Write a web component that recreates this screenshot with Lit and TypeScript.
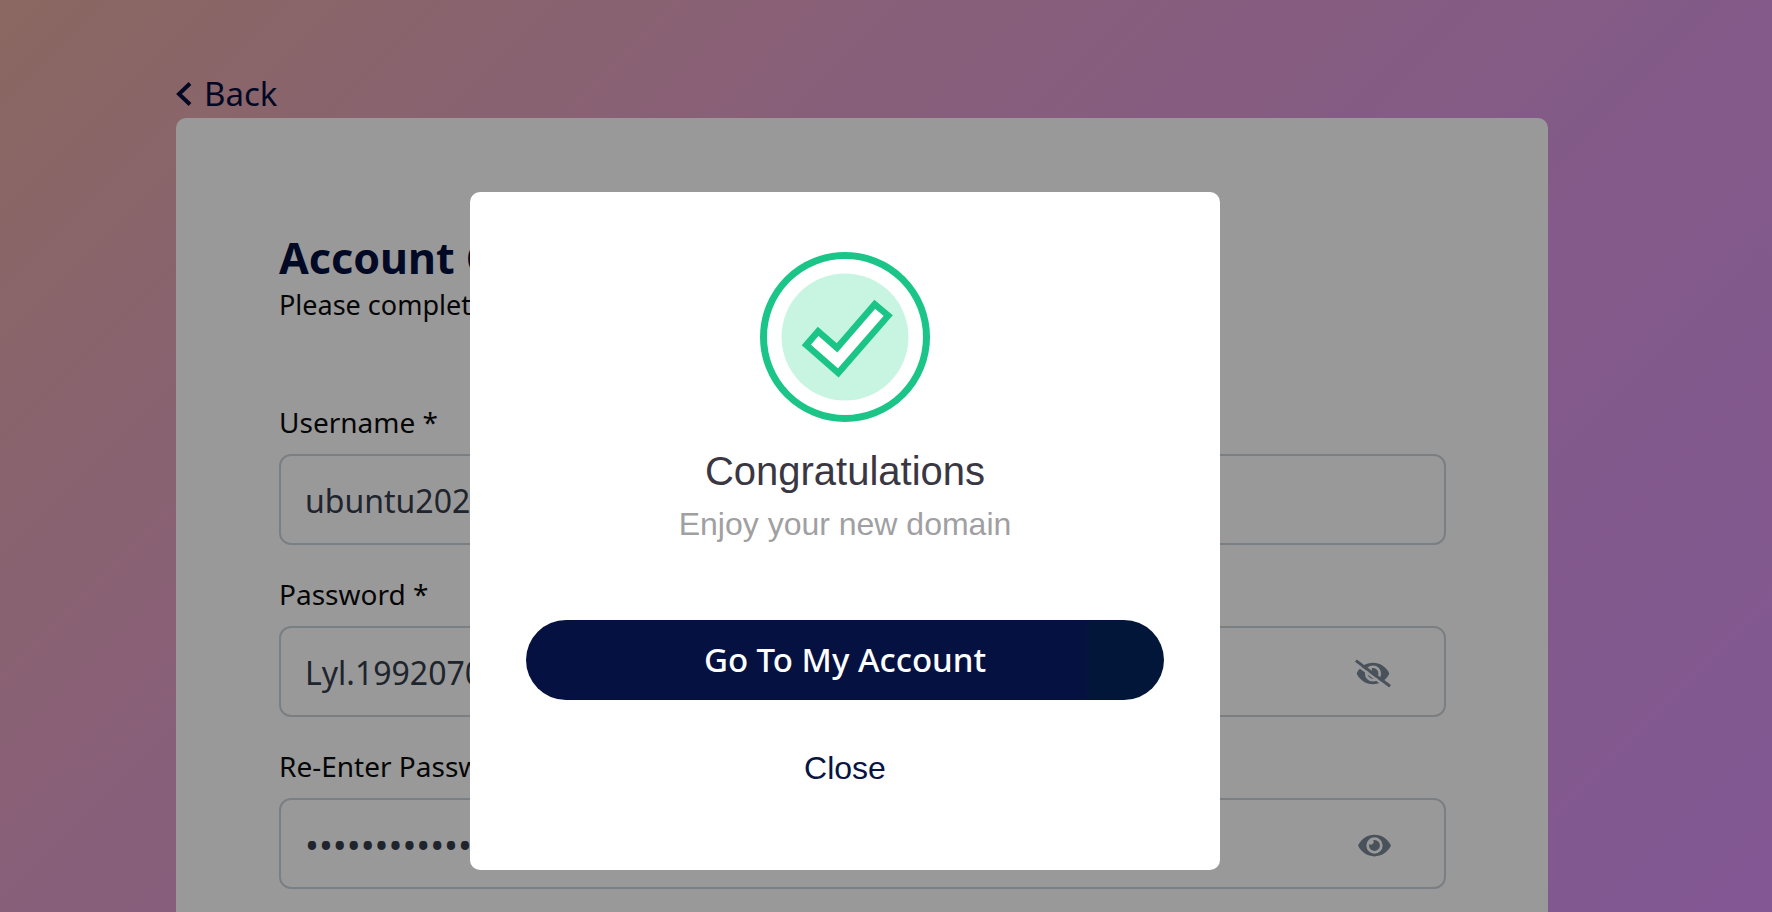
import { LitElement, html, css, svg } from "lit";
import { customElement, property, state } from "lit/decorators.js";

const EYE_SHAPE = "M572.52 241.4C518.29 135.59 410.93 64 288 64S57.68 135.64 3.48 241.41a32.35 32.35 0 0 0 0 29.19C57.71 376.41 165.07 448 288 448s230.32-71.64 284.52-177.41a32.35 32.35 0 0 0 0-29.19zM288 400a144 144 0 1 1 144-144 143.93 143.93 0 0 1-144 144zm0-240a95.31 95.31 0 0 0-25.31 3.79 47.85 47.85 0 0 1-66.9 66.9A95.78 95.78 0 1 0 288 160z";

const EYE = html`<svg viewBox="0 0 576 512" width="33" height="29" aria-hidden="true"><path fill="currentColor" d=${EYE_SHAPE} /></svg>`;

const EYE_OFF = html`<svg viewBox="0 0 640 512" width="36" height="29" aria-hidden="true">
  ${svg`<mask id="gap">
    <rect width="640" height="512" fill="#fff" />
    <path d="M-20 62 592 521" stroke="#000" stroke-width="44" />
  </mask>
  <g mask="url(#gap)"><path transform="translate(32 0)" fill="currentColor" d=${EYE_SHAPE} /></g>
  <path d="M16 26 624 482" stroke="currentColor" stroke-width="52" />`}
</svg>`;

@customElement("form-field")
class FormField extends LitElement {
  @property() label = "";
  @property() value = "";
  @property({ type: Boolean }) secret = false;
  @property({ type: Boolean }) revealed = false;

  static styles = css`
    :host { display: block; }
    .label {
      display: block;
      margin-bottom: 12px;
      font-size: 28px;
      line-height: 40px;
      color: #0a0a0c;
    }
    .box {
      display: flex;
      align-items: center;
      box-sizing: border-box;
      height: 91px;
      padding: 3px 53px 0 24px;
      border: 2px solid #cbd4dc;
      border-radius: 12px;
    }
    .input {
      flex: 1;
      min-width: 0;
      height: 44px;
      padding: 0;
      border: 0;
      outline: 0;
      background: none;
      font: inherit;
      font-size: 32px;
      line-height: 44px;
      color: #343c4c;
    }
    .input.masked { font-size: 37px; }
    .toggle {
      display: flex;
      padding: 0;
      border: 0;
      background: none;
      color: #7b8798;
    }
  `;

  render() {
    const hidden = this.secret && !this.revealed;
    return html`
      <label class="label" for="field">${this.label}</label>
      <div class="box">
        <input
          class=${hidden ? "input masked" : "input"}
          id="field"
          type=${hidden ? "password" : "text"}
          .value=${this.value}
          spellcheck="false"
        />
        ${this.secret
          ? html`<button
              class="toggle"
              type="button"
              aria-label=${hidden ? "Show password" : "Hide password"}
              @click=${() => (this.revealed = !this.revealed)}
            >${hidden ? EYE : EYE_OFF}</button>`
          : null}
      </div>
    `;
  }
}

@customElement("success-dialog")
class SuccessDialog extends LitElement {
  static styles = css`
    :host {
      position: fixed;
      inset: 0;
      display: flex;
      justify-content: center;
      align-items: flex-start;
      padding: 192px 82px 0 0;
      background: rgba(0, 0, 0, 0.4);
      font-family: "Liberation Sans", Arial, sans-serif;
    }
    .dialog {
      display: flex;
      flex-direction: column;
      align-items: center;
      box-sizing: border-box;
      width: 100%;
      max-width: 750px;
      padding: 60px 56px 82px;
      border-radius: 10px;
      background: #fff;
      text-align: center;
    }
    .badge { display: block; }
    .title {
      margin: 25px 0 9px;
      font-size: 40px;
      line-height: 48px;
      font-weight: 400;
      color: #3a3743;
    }
    .text {
      margin: 0 0 76px;
      font-size: 32px;
      line-height: 40px;
      color: #a0a0a2;
    }
    .primary {
      width: 100%;
      height: 80px;
      padding: 0;
      border: 0;
      border-radius: 40px;
      background: linear-gradient(90deg, #041141 88%, #02163a 88%);
      color: #fff;
      font: 500 33px/44px "Noto Sans", sans-serif;
    }
    .close {
      margin-top: 48px;
      padding: 0;
      border: 0;
      background: none;
      font: inherit;
      font-size: 32px;
      line-height: 40px;
      color: #0a1440;
    }
  `;

  private dismiss() {
    this.dispatchEvent(new CustomEvent("dismiss"));
  }

  render() {
    return html`
      <div class="dialog" role="dialog" aria-modal="true" aria-labelledby="title">
        <svg class="badge" width="170" height="170" viewBox="0 0 170 170" aria-hidden="true">
          <circle cx="85" cy="85" r="81.5" fill="none" stroke="#1bc588" stroke-width="7" />
          <circle cx="85" cy="85" r="63.5" fill="#c8f5e1" />
          <path d="M46.3 93 58.1 79.4 77 95.8 114.7 52.3 128.2 63.6 78.3 121Z" fill="#fff" stroke="#1bc588" stroke-width="6.5" />
        </svg>
        <h2 class="title" id="title">Congratulations</h2>
        <p class="text">Enjoy your new domain</p>
        <button class="primary" type="button">Go To My Account</button>
        <button class="close" type="button" @click=${this.dismiss}>Close</button>
      </div>
    `;
  }
}

@customElement("app-root")
class AppRoot extends LitElement {
  @state() private open = true;

  static styles = css`
    :host {
      display: block;
      box-sizing: border-box;
      height: 100vh;
      overflow: hidden;
      padding: 71px 224px 0 176px;
      background: linear-gradient(135deg, #e8ada2 0%, #e6a8b0 12%, #e39fca 34%, #da97e4 66%, #d992f6 100%);
      font-family: "Noto Sans", sans-serif;
    }
    .back {
      display: inline-flex;
      align-items: center;
      gap: 12px;
      font-size: 33px;
      line-height: 46px;
      color: #03103f;
      text-decoration: none;
    }
    .card {
      margin-top: 1px;
      padding: 114px 102px 80px 103px;
      border-radius: 10px;
      background: #fff;
    }
    .title {
      margin: 0;
      font-size: 43px;
      line-height: 52px;
      font-weight: 700;
      color: #03103f;
    }
    .lead {
      margin: 1px 0 77px;
      font-size: 27px;
      line-height: 40px;
      color: #0a0a0c;
    }
    .fields {
      display: grid;
      gap: 29px;
    }
    .top { display: flex; }
  `;

  render() {
    return html`
      <nav class="top">
        <a class="back" href="#">
          <svg width="16" height="26" viewBox="0 0 16 26" aria-hidden="true">
            <path d="M14 2.5 3 13 14 23.5" fill="none" stroke="currentColor" stroke-width="4" />
          </svg>
          Back
        </a>
      </nav>
      <main class="card">
        <h1 class="title">Account Creation</h1>
        <p class="lead">Please complete the form</p>
        <form class="fields">
          <form-field label="Username *" value="ubuntu2022"></form-field>
          <form-field label="Password *" value="Lyl.19920706" secret revealed></form-field>
          <form-field label="Re-Enter Password *" value="Lyl.19920706" secret></form-field>
        </form>
      </main>
      ${this.open ? html`<success-dialog @dismiss=${() => (this.open = false)}></success-dialog>` : null}
    `;
  }
}
